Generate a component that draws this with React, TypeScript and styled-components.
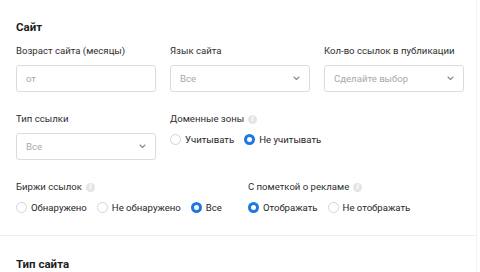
import React from 'react';
import styled, { createGlobalStyle } from 'styled-components';

const GlobalStyle = createGlobalStyle`
  html, body {
    margin: 0;
    padding: 0;
    background: #ffffff;
  }
  body {
    font-family: Roboto, "Liberation Sans", Arial, sans-serif;
    color: #333333;
    overflow: hidden;
  }
`;

const Panel = styled.div`
  width: 477px;
  height: 272px;
  border-right: 1px solid #f3f3f5;
  box-sizing: border-box;
  overflow: hidden;
`;

const Section = styled.section<{ $divider?: boolean }>`
  padding: ${({ $divider }) => ($divider ? '20px 16px 0' : '19px 16px 22px')};
  border-top: ${({ $divider }) => ($divider ? '1px solid #eeeeee' : 'none')};
  box-sizing: border-box;
`;

const SectionTitle = styled.h2`
  margin: 0;
  font-size: 11.5px;
  line-height: 16px;
  font-weight: 700;
  color: #1f1f1f;
`;

const Grid = styled.div`
  display: grid;
  grid-template-columns: repeat(3, 140px);
  column-gap: 14px;
  row-gap: 21px;
  margin: 10px 0 21px;
`;

const Field = styled.div`
  display: flex;
  flex-direction: column;
`;

const Label = styled.div`
  display: flex;
  align-items: center;
  gap: 4px;
  font-size: 9.6px;
  line-height: 12px;
  height: 12px;
  color: #2e2e2e;
  margin-bottom: 8px;
  white-space: nowrap;
`;

const Info = styled.span`
  display: inline-flex;
  align-items: center;
  justify-content: center;
  width: 9px;
  height: 9px;
  border-radius: 50%;
  background: #e4e4e6;
  color: #ffffff;
  font-size: 7px;
  font-style: italic;
  font-weight: 700;
  font-family: "DejaVu Serif", serif;
`;

const Box = styled.div`
  box-sizing: border-box;
  height: 27px;
  border: 1px solid #dcdcdc;
  border-radius: 3px;
  display: flex;
  align-items: center;
  justify-content: space-between;
  padding: 0 9px;
  font-size: 9.6px;
  color: #a8a8a8;
`;

const Chevron = () => (
  <svg width="7" height="5" viewBox="0 0 7 5" fill="none">
    <path d="M1 1l2.5 2.5L6 1" stroke="#8a8a8a" strokeWidth="1.1" strokeLinecap="round" strokeLinejoin="round" />
  </svg>
);

const RadioRow = styled.div`
  display: flex;
  align-items: center;
  gap: 10px;
  height: 12px;
`;

const RadioItem = styled.label`
  display: flex;
  align-items: center;
  gap: 4px;
  font-size: 9.6px;
  color: #262626;
  white-space: nowrap;
`;

const Circle = styled.span<{ $on?: boolean }>`
  box-sizing: border-box;
  width: 11px;
  height: 11px;
  border-radius: 50%;
  border: ${({ $on }) => ($on ? '3.5px solid #1f77e0' : '1px solid #d4d4d8')};
  background: #ffffff;
`;

const Row = styled.div`
  display: flex;
  gap: 26px;
`;

const Group = styled.div`
  display: flex;
  flex-direction: column;
`;

type RadioProps = { label: string; on?: boolean };
const Radio = ({ label, on }: RadioProps) => (
  <RadioItem>
    <Circle $on={on} />
    {label}
  </RadioItem>
);

export default function App() {
  return (
    <Panel>
      <GlobalStyle />
      <Section>
        <SectionTitle>Сайт</SectionTitle>
        <Grid>
          <Field>
            <Label>Возраст сайта (месяцы)</Label>
            <Box>от</Box>
          </Field>
          <Field>
            <Label>Язык сайта</Label>
            <Box>
              Все
              <Chevron />
            </Box>
          </Field>
          <Field>
            <Label>Кол-во ссылок в публикации</Label>
            <Box>
              Сделайте выбор
              <Chevron />
            </Box>
          </Field>
          <Field>
            <Label>Тип ссылки</Label>
            <Box>
              Все
              <Chevron />
            </Box>
          </Field>
          <Field>
            <Label>
              Доменные зоны <Info>i</Info>
            </Label>
            <RadioRow>
              <Radio label="Учитывать" />
              <Radio label="Не учитывать" on />
            </RadioRow>
          </Field>
        </Grid>
        <Row>
          <Group>
            <Label>
              Биржи ссылок <Info>i</Info>
            </Label>
            <RadioRow>
              <Radio label="Обнаружено" />
              <Radio label="Не обнаружено" />
              <Radio label="Все" on />
            </RadioRow>
          </Group>
          <Group>
            <Label>
              С пометкой о рекламе <Info>i</Info>
            </Label>
            <RadioRow>
              <Radio label="Отображать" on />
              <Radio label="Не отображать" />
            </RadioRow>
          </Group>
        </Row>
      </Section>
      <Section $divider>
        <SectionTitle>Тип сайта</SectionTitle>
      </Section>
    </Panel>
  );
}
